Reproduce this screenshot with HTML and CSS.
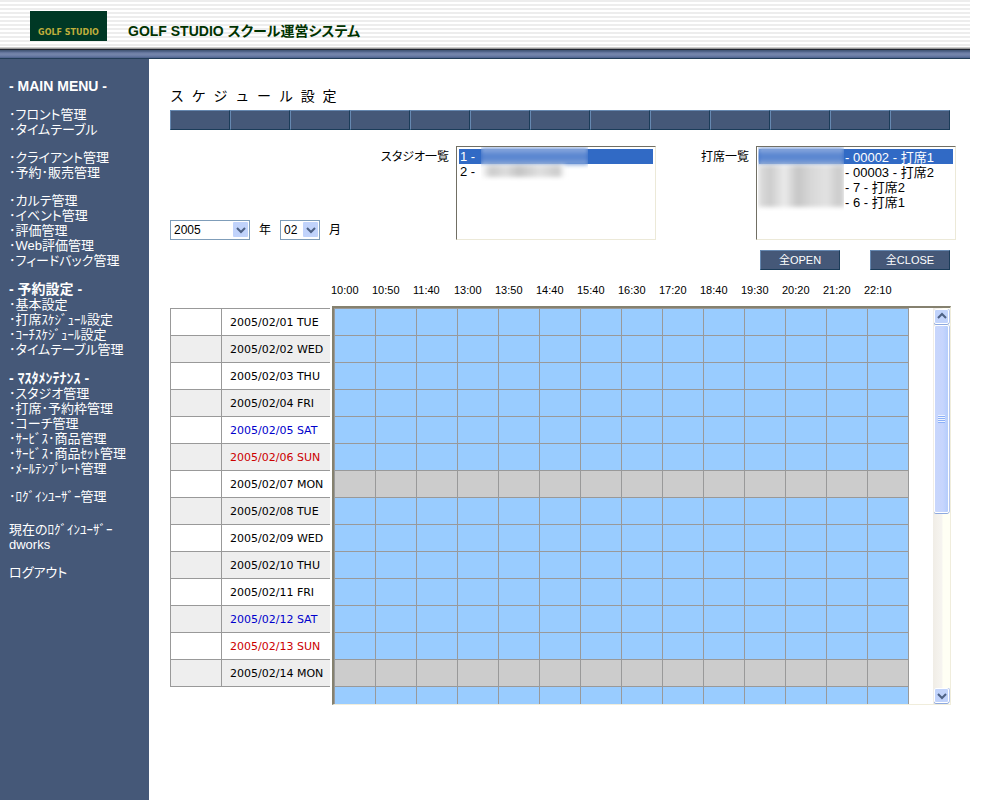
FILE: index.html
```html
<!DOCTYPE html>
<html lang="ja">
<head>
<meta charset="utf-8">
<title>GOLF STUDIO スクール運営システム</title>
<link rel="stylesheet" href="styles.css">
</head>
<body>
<header class="header">
  <div class="logo">GOLF STUDIO</div>
  <h1 class="site-title">GOLF STUDIO スクール運営システム</h1>
</header>
<div class="page">
  <nav class="sidebar">
    <h2 class="menu-title">- MAIN MENU -</h2>
    <ul class="menu">
      <li><a href="#">･フロント管理</a></li>
      <li><a href="#">･タイムテーブル</a></li>
    </ul>
    <ul class="menu">
      <li><a href="#">･クライアント管理</a></li>
      <li><a href="#">･予約･販売管理</a></li>
    </ul>
    <ul class="menu">
      <li><a href="#">･カルテ管理</a></li>
      <li><a href="#">･イベント管理</a></li>
      <li><a href="#">･評価管理</a></li>
      <li><a href="#">･Web評価管理</a></li>
      <li><a href="#">･フィードバック管理</a></li>
    </ul>
    <h2 class="menu-title">- 予約設定 -</h2>
    <ul class="menu joined">
      <li><a href="#">･基本設定</a></li>
      <li><a href="#">･打席ｽｹｼﾞｭｰﾙ設定</a></li>
      <li><a href="#">･ｺｰﾁｽｹｼﾞｭｰﾙ設定</a></li>
      <li><a href="#">･タイムテーブル管理</a></li>
    </ul>
    <h2 class="menu-title">- ﾏｽﾀﾒﾝﾃﾅﾝｽ -</h2>
    <ul class="menu joined">
      <li><a href="#">･スタジオ管理</a></li>
      <li><a href="#">･打席･予約枠管理</a></li>
      <li><a href="#">･コーチ管理</a></li>
      <li><a href="#">･ｻｰﾋﾞｽ･商品管理</a></li>
      <li><a href="#">･ｻｰﾋﾞｽ･商品ｾｯﾄ管理</a></li>
      <li><a href="#">･ﾒｰﾙﾃﾝﾌﾟﾚｰﾄ管理</a></li>
    </ul>
    <ul class="menu">
      <li><a href="#">･ﾛｸﾞｲﾝﾕｰｻﾞｰ管理</a></li>
    </ul>
    <p class="login-user">現在のﾛｸﾞｲﾝﾕｰｻﾞｰ<br>dworks</p>
    <a class="logout" href="#">ログアウト</a>
  </nav>
  <main class="main">
    <h2 class="page-title">ス&nbsp; ケ&nbsp; ジ&nbsp; ュ&nbsp; ー&nbsp; ル&nbsp; 設&nbsp; 定</h2>
    <div class="toolbar">
      <span></span><span></span><span></span><span></span><span></span><span></span><span></span><span></span><span></span><span></span><span></span><span></span><span></span>
    </div>
    <form class="filters">
      <div class="period">
        <span class="drop year">
          <select id="year"><option>2005</option></select>
          <svg class="drop-arrow" viewBox="0 0 15 15"><rect width="15" height="15" rx="1"/><path d="M4 6l4 4 4-4"/></svg>
        </span>
        <label for="year">年</label>
        <span class="drop month">
          <select id="month"><option>02</option></select>
          <svg class="drop-arrow" viewBox="0 0 15 15"><rect width="15" height="15" rx="1"/><path d="M4 6l4 4 4-4"/></svg>
        </span>
        <label for="month">月</label>
      </div>
      <div class="picker">
        <label for="studio">スタジオ一覧</label>
        <div class="listbox">
          <select id="studio" size="6">
            <option selected>1 -</option>
            <option>2 -</option>
          </select>
          <div class="mask mask-studio"><i></i><b></b></div>
        </div>
      </div>
      <div class="picker">
        <label for="seat">打席一覧</label>
        <div class="listbox">
          <select id="seat" class="seats" size="6">
            <option selected>- 00002 - 打席1</option>
            <option>- 00003 - 打席2</option>
            <option>- 7 - 打席2</option>
            <option>- 6 - 打席1</option>
          </select>
          <div class="mask mask-seat"><i></i><b></b></div>
        </div>
      </div>
    </form>
    <div class="actions">
      <button type="button">全OPEN</button>
      <button type="button">全CLOSE</button>
    </div>
    <div class="times">
      <span>10:00</span><span>10:50</span><span>11:40</span><span>13:00</span><span>13:50</span><span>14:40</span><span>15:40</span><span>16:30</span><span>17:20</span><span>18:40</span><span>19:30</span><span>20:20</span><span>21:20</span><span>22:10</span>
    </div>
    <div class="schedule">
      <table class="dates">
        <tbody id="dates"></tbody>
      </table>
      <div class="panel">
        <div class="viewport">
          <table class="slots"><tbody id="slots"></tbody></table>
        </div>
        <div class="scrollbar">
          <button type="button" class="scroll-button" aria-label="上へ"><svg viewBox="0 0 13 13"><path d="M3 8l4-4 4 4"/></svg></button>
          <div class="thumb"><span class="grip"></span></div>
          <button type="button" class="scroll-button down" aria-label="下へ"><svg viewBox="0 0 13 13"><path d="M3 5l4 4 4-4"/></svg></button>
        </div>
      </div>
    </div>
  </main>
</div>
<script src="schedule.js"></script>
</body>
</html>
```

FILE: styles.css
```css
* { box-sizing: border-box; }

body {
  margin: 0;
  min-height: 100vh;
  display: flex;
  flex-direction: column;
  background: #fff;
  color: #000;
  font: 12px/15px "Liberation Sans", "Noto Sans CJK JP", sans-serif;
  font-feature-settings: "palt";
}

h1, h2, p, ul { margin: 0; padding: 0; }
ul { list-style: none; }

select, button, input { font: inherit; color: inherit; font-feature-settings: inherit; }

.header {
  display: flex;
  align-items: center;
  gap: 21px;
  height: 59px;
  margin-right: 30px;
  padding: 0 30px 7px;
  background:
    linear-gradient(#ccc 0 1px, #999 1px 2px, #22252f 2px 3px, #455878 3px 4px, #5d6f97 5px, #7686ab 7px, #6a7ca5 9px, #4b608a 11px, #233d58 11px) bottom / 100% 12px no-repeat,
    repeating-linear-gradient(#ededed 0 2px, #fff 2px 4px);
}

.logo {
  display: flex;
  align-items: flex-end;
  justify-content: center;
  width: 77px;
  height: 30px;
  padding-bottom: 3px;
  background: #003825;
  color: #bfae3c;
  font: bold 8px/10px "DejaVu Sans", sans-serif;
  white-space: nowrap;
}

.site-title { color: #003300; font-size: 14px; line-height: 16px; padding-top: 9px; }

.page { display: flex; flex: 1; }

.sidebar {
  flex: none;
  width: 149px;
  padding: 20px 0 20px 9px;
  background: #455878;
  color: #fff;
  font-size: 13px;
  white-space: nowrap;
}
.sidebar a { color: inherit; text-decoration: none; }
.menu-title { font-size: 14px; line-height: 15px; }
.menu { margin-top: 13px; }
.menu.joined { margin-top: 0; }
.menu + .menu-title, .joined + .menu-title { margin-top: 14px; }
.login-user { margin: 18px 0 13px; }
.logout { display: block; }

.main { flex: 1; min-width: 0; padding: 30px 44px 20px 21px; }

.page-title { margin-bottom: 6px; font-size: 14px; font-weight: 400; line-height: 15px; font-feature-settings: normal; }

.toolbar { display: flex; }
.toolbar span, .actions button {
  height: 20px;
  background: #455878;
  border: 1px solid;
  border-color: #6688b0 #1b3c59 #1b3c59 #6688b0;
}
.toolbar span { width: 60px; }

.filters { display: flex; margin-top: 16px; }
.period { display: flex; align-items: center; align-self: flex-end; gap: 9px; margin-right: auto; }

.drop { position: relative; height: 20px; }
.drop select {
  appearance: none;
  width: 100%;
  height: 20px;
  padding: 0 0 0 3px;
  border: 1px solid #7f9db9;
  border-radius: 0;
  background: #fff;
}
.year { width: 80px; }
.month { width: 40px; }
.drop-arrow { position: absolute; top: 2px; right: 2px; width: 15px; height: 15px; pointer-events: none; }
.drop-arrow rect { fill: #c1d3fb; }
.drop-arrow path, .scroll-button path { fill: none; stroke: #4d6185; stroke-width: 2; }

.picker { display: flex; }
.picker label { width: 100px; padding: 4px 7px 0 0; text-align: right; }

.listbox { position: relative; width: 200px; height: 94px; }
.listbox select {
  display: block;
  width: 100%;
  height: 100%;
  padding: 2px;
  border: 1px solid;
  border-color: #716f64 #ece9d8 #ece9d8 #716f64;
  border-radius: 0;
  background: #fff;
  overflow: hidden;
  outline: 0;
}
.listbox option {
  display: flex;
  align-items: center;
  min-height: 15px;
  height: 15px;
  padding: 0 1px;
  font-size: 13px;
  line-height: 15px;
}
.listbox option:checked { background: #316ac5 linear-gradient(#316ac5, #316ac5); color: #fff; }
.listbox .seats option { padding-left: 86px; }

/* Redacted names over the lists */
.mask { position: absolute; top: 1px; overflow: hidden; pointer-events: none; }
.mask i, .mask b { display: block; filter: blur(2px); }
.mask i { height: 18px; background: linear-gradient(#a9bfe6, #5a86d0 40%, #5a86d0 70%, #9db6df); }
.mask-studio { left: 25px; width: 107px; height: 38px; }
.mask-studio b { width: 84px; height: 12px; background: linear-gradient(90deg, #fff, #ccc 12%, #ddd 30%, #c4c4c4 45%, #e0e0e0 70%, #ccc 92%, #fff); }
.mask-seat { left: 2px; width: 86px; height: 66px; }
.mask-seat b { height: 42px; background: linear-gradient(90deg, #e0e0e0, #ccc 14%, #ebebeb 31%, #c6c6c6 46%, #d8d8d8 62%, #e2e2e2 80%, #cecece 92%); }

.actions { display: flex; justify-content: flex-end; gap: 30px; margin: 10px 6px 0 0; }
.actions button { width: 80px; padding: 0; color: #fff; font-size: 11px; line-height: 16px; }

.times { display: flex; margin: 13px 0 8px 161px; font-size: 11px; }
.times span { width: 41px; }

.schedule { display: flex; align-items: flex-start; gap: 2px; margin-right: 5px; }

.dates, .slots { border-collapse: separate; border-spacing: 0; table-layout: fixed; }
.dates td, .dates th, .slots td { height: 27px; padding: 0; }

.dates { flex: none; width: 160px; margin-top: 2px; border-bottom: 1px solid #999; }
.dates td, .dates th { border: solid #999; border-width: 1px 0 0 1px; }
.dates td { width: 51px; }
.dates th { padding-left: 8px; font: 11px/15px "DejaVu Sans", sans-serif; text-align: left; white-space: nowrap; }
.dates tr:nth-child(even) { background: #eee; }
.dates .sat { color: #0000cc; }
.dates .sun { color: #cc0000; }

.panel {
  display: flex;
  flex: 1;
  min-width: 0;
  height: 399px;
  border: solid;
  border-width: 2px 1px 1px 2px;
  border-color: #85816f #f0eddc #f0eddc #85816f;
}
.viewport { flex: 1; min-width: 0; overflow: hidden; }
.slots { width: 575px; border-right: 1px solid #999; }
.slots td { border: solid #999; border-width: 1px 0 0 1px; background: #99ccff; }
.slots .closed td { background: #ccc; }

.scrollbar {
  display: flex;
  flex-direction: column;
  flex: none;
  width: 17px;
  padding: 1px 1px 0;
  background: linear-gradient(90deg, #f0ede6, #f6f4f0 50%, #fffff4 60%, #fffff4);
}
.scroll-button, .thumb {
  border: 1px solid #fff;
  border-radius: 2px;
  background: #c1d3fb;
  box-shadow: 0 1px 0 #8ea9de, 1px 0 0 #b5c7ee;
}
.scroll-button { display: block; width: 15px; height: 15px; padding: 0; }
.scroll-button svg { display: block; width: 13px; height: 13px; }
.scroll-button.down { margin-top: auto; margin-bottom: 1px; }
.thumb {
  display: flex;
  align-items: center;
  justify-content: center;
  height: 188px;
  margin-top: 1px;
  background: linear-gradient(90deg, #c8d6fc, #c6d5fd 60%, #b5cdfb);
}
.grip { width: 7px; height: 8px; background: repeating-linear-gradient(#eef4fe 0 1px, #8cb0f8 1px 2px); }
```

FILE: schedule.js
```js
const days = ["TUE", "WED", "THU", "FRI", "SAT", "SUN", "MON"];
const slotCount = 14;
let dateRows = "";
let slotRows = "";
for (let d = 1; d <= 28; d++) {
  const day = days[(d - 1) % 7];
  if (d <= 14) {
    dateRows += `<tr><td></td><th scope="row" class="${day.toLowerCase()}">2005/02/${String(d).padStart(2, "0")} ${day}</th></tr>`;
  }
  slotRows += `<tr${day === "MON" ? ' class="closed"' : ""}>${"<td></td>".repeat(slotCount)}</tr>`;
}
document.getElementById("dates").innerHTML = dateRows;
document.getElementById("slots").innerHTML = slotRows;
```
